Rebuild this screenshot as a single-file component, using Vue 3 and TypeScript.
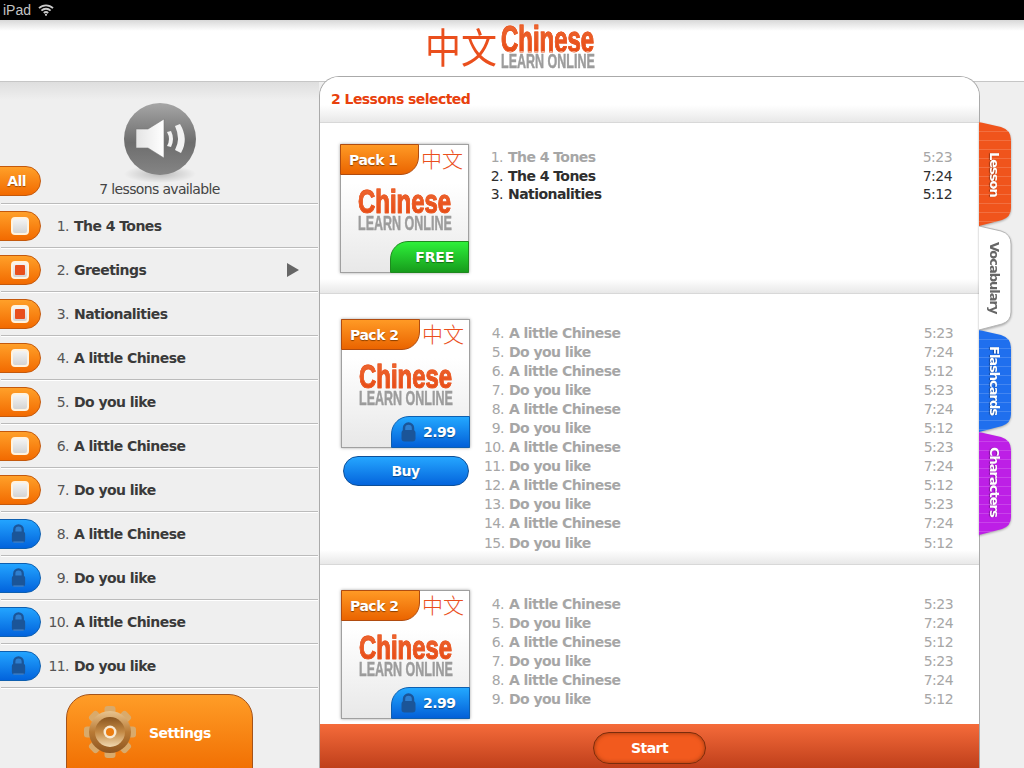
<script setup lang="ts">
interface Row { n: number; name: string; state: 'off' | 'on' | 'lock'; play?: boolean }
interface Lesson { n: number; name: string; time: string; active?: boolean }
interface Pack { title: string; badge: 'free' | 'price'; buy?: boolean; cls: string; lessons: Lesson[] }

const names = ['A little Chinese', 'Do you like']
const times = ['5:23', '7:24', '5:12']

const rows: Row[] = [
  { n: 1, name: 'The 4 Tones', state: 'off' },
  { n: 2, name: 'Greetings', state: 'on', play: true },
  { n: 3, name: 'Nationalities', state: 'on' },
  { n: 4, name: names[0], state: 'off' },
  { n: 5, name: names[1], state: 'off' },
  { n: 6, name: names[0], state: 'off' },
  { n: 7, name: names[1], state: 'off' },
  { n: 8, name: names[0], state: 'lock' },
  { n: 9, name: names[1], state: 'lock' },
  { n: 10, name: names[0], state: 'lock' },
  { n: 11, name: names[1], state: 'lock' }
]

const seq = (from: number, count: number): Lesson[] =>
  Array.from({ length: count }, (_, i) => ({
    n: from + i,
    name: names[i % 2],
    time: times[i % 3]
  }))

const packs: Pack[] = [
  {
    title: 'Pack 1',
    badge: 'free',
    cls: 'first',
    lessons: [
      { n: 1, name: 'The 4 Tones', time: '5:23' },
      { n: 2, name: 'The 4 Tones', time: '7:24', active: true },
      { n: 3, name: 'Nationalities', time: '5:12', active: true }
    ]
  },
  { title: 'Pack 2', badge: 'price', buy: true, cls: 'second', lessons: seq(4, 12) },
  { title: 'Pack 2', badge: 'price', cls: 'third', lessons: seq(4, 6) }
]

const tabs = [
  { label: 'Lesson', cls: 'lesson', h: 104, fill: '#f0541c' },
  { label: 'Vocabulary', cls: 'vocab', h: 104, fill: '#ffffff' },
  { label: 'Flashcards', cls: 'flash', h: 102, fill: '#1f6fee' },
  { label: 'Characters', cls: 'chars', h: 103, fill: '#bd1fe6' }
]

const tabPath = (h: number): string =>
  `M0 0 L22 5 Q32 8 32 18 L32 ${h - 18} Q32 ${h - 9} 23 ${h - 6} L0 ${h} Z`

const teeth = [0, 45, 90, 135, 180, 225, 270, 315]
</script>

<template>
  <div class="app">
    <div class="status">
      <span class="carrier">iPad</span>
      <svg class="wifi" width="16" height="12" viewBox="0 0 16 12">
        <path d="M1 4.2 A10 10 0 0 1 15 4.2" fill="none" stroke="#ccc" stroke-width="1.8" />
        <path d="M3.4 6.6 A6.6 6.6 0 0 1 12.6 6.6" fill="none" stroke="#ccc" stroke-width="1.8" />
        <path d="M5.8 9 A3.2 3.2 0 0 1 10.2 9" fill="none" stroke="#ccc" stroke-width="1.8" />
        <circle cx="8" cy="10.8" r="1.1" fill="#ccc" />
      </svg>
    </div>

    <header class="top">
      <div class="cjk large">中文</div>
      <div class="brand large">
        <div class="b1">Chinese</div>
        <div class="b2">LEARN ONLINE</div>
      </div>
    </header>

    <div class="body">
      <aside class="side">
        <div class="hero">
          <button class="pill orange all">All</button>
          <div class="speaker-wrap">
            <svg class="speaker" width="84" height="84" viewBox="0 0 84 84">
              <defs>
                <linearGradient id="disc" x1="0" y1="0" x2="0" y2="1">
                  <stop offset="0" stop-color="#a6a6a6" />
                  <stop offset="0.55" stop-color="#6d6d6d" />
                  <stop offset="1" stop-color="#858585" />
                </linearGradient>
                <linearGradient id="cone" x1="0" y1="0" x2="1" y2="0">
                  <stop offset="0" stop-color="#e4e4e4" />
                  <stop offset="1" stop-color="#ffffff" />
                </linearGradient>
                <radialGradient id="drop" cx="0.5" cy="0.5" r="0.5">
                  <stop offset="0" stop-color="#000" stop-opacity="0.22" />
                  <stop offset="1" stop-color="#000" stop-opacity="0" />
                </radialGradient>
              </defs>
              <ellipse cx="42" cy="74" rx="36" ry="9" fill="url(#drop)" />
              <circle cx="42" cy="39" r="36" fill="url(#disc)" />
              <path d="M18 29 H30 L46 19 V58 L30 48 H18 Z" fill="url(#cone)" stroke="#777" stroke-width="0.6" />
              <path d="M49 32 Q53 39 49 46 L53 47 Q57 39 53 31 Z" fill="#f2f2f2" />
              <path d="M57 26 L62 24 Q71 39 63 53 L57 50 Q63 39 57 26 Z" fill="#f2f2f2" />
            </svg>
            <div class="avail">7 lessons available</div>
          </div>
        </div>

        <div v-for="r in rows" :key="r.n" class="row">
          <button class="pill" :class="r.state === 'lock' ? 'blue' : 'orange'">
            <span v-if="r.state !== 'lock'" class="check">
              <i v-if="r.state === 'on'"></i>
            </span>
            <svg v-else class="lock" width="15" height="19" viewBox="0 0 15 20">
              <path d="M3 9 V6 A4.5 4.5 0 0 1 12 6 V9" fill="#2e7fd0" stroke="#1b5598" stroke-width="2.4" />
              <rect x="0.5" y="8" width="14" height="11.5" rx="3" fill="#1b5598" />
              <path d="M2 19 H13" stroke="#5b9be0" stroke-width="0.8" />
            </svg>
          </button>
          <span class="num">{{ r.n }}.</span>
          <b class="name">{{ r.name }}</b>
          <svg v-if="r.play" class="play" width="12" height="14" viewBox="0 0 12 14">
            <path d="M0 0 L12 7 L0 14 Z" fill="#666" />
          </svg>
        </div>

        <div class="settings-wrap">
          <button class="settings">
            <svg class="gear" width="54" height="54" viewBox="0 0 54 54">
              <defs>
                <linearGradient id="gearOut" x1="0" y1="0" x2="0" y2="1">
                  <stop offset="0" stop-color="#e9c48e" />
                  <stop offset="0.5" stop-color="#b97a35" />
                  <stop offset="1" stop-color="#8d5520" />
                </linearGradient>
                <linearGradient id="gearIn" x1="0" y1="0" x2="0" y2="1">
                  <stop offset="0" stop-color="#8a551f" />
                  <stop offset="0.5" stop-color="#c48a45" />
                  <stop offset="1" stop-color="#f0d8b0" />
                </linearGradient>
              </defs>
              <rect v-for="a in teeth" :key="a" x="21.5" y="1" width="11" height="10" rx="3" fill="#d9aa6b" :transform="`rotate(${a} 27 27)`" />
              <circle cx="27" cy="27" r="21" fill="url(#gearOut)" />
              <circle cx="27" cy="27" r="15" fill="url(#gearIn)" />
              <circle cx="27" cy="27" r="6.5" fill="#f8e9d2" />
              <circle cx="27" cy="27" r="4" fill="#ed7d10" />
            </svg>
            <span>Settings</span>
          </button>
        </div>
      </aside>

      <main class="panel">
        <div class="panel-head">2 Lessons selected</div>
        <section v-for="(p, i) in packs" :key="i" class="pack" :class="p.cls">
          <div class="cover-col">
            <div class="cover">
              <div class="cover-top">
                <span class="tag">{{ p.title }}</span>
                <span class="cjk small">中文</span>
              </div>
              <div class="brand small">
                <div class="b1">Chinese</div>
                <div class="b2">LEARN ONLINE</div>
              </div>
              <div class="cover-foot">
                <span class="badge" :class="p.badge">
                  <template v-if="p.badge === 'free'">FREE</template>
                  <template v-else>
                    <svg width="15" height="20" viewBox="0 0 15 20">
                      <path d="M3 9 V6 A4.5 4.5 0 0 1 12 6 V9" fill="#2e7fd0" stroke="#1b5598" stroke-width="2.4" />
                      <rect x="0.5" y="8" width="14" height="11.5" rx="3" fill="#1b5598" />
                    </svg>
                    <span>2.99</span>
                  </template>
                </span>
              </div>
            </div>
            <button v-if="p.buy" class="buy">Buy</button>
          </div>
          <ol class="lessons">
            <li v-for="l in p.lessons" :key="l.n" :class="{ active: l.active }">
              <span class="num">{{ l.n }}.</span>
              <b class="name">{{ l.name }}</b>
              <span class="time">{{ l.time }}</span>
            </li>
          </ol>
        </section>
        <div class="foot">
          <button class="start">Start</button>
        </div>
      </main>

      <nav class="tabs">
        <div v-for="t in tabs" :key="t.label" class="tab" :class="t.cls" :style="{ height: t.h + 'px' }">
          <svg width="35" :height="t.h" :viewBox="`0 0 35 ${t.h}`">
            <defs>
              <pattern :id="'st-' + t.cls" width="4" height="9" patternUnits="userSpaceOnUse">
                <rect y="0" width="4" height="1" fill="#fff" opacity="0.16" />
              </pattern>
            </defs>
            <path :d="tabPath(t.h)" :fill="t.fill" />
            <path v-if="t.cls !== 'vocab'" :d="tabPath(t.h)" :fill="`url(#st-${t.cls})`" />
            <path v-else :d="tabPath(t.h).replace(' Z', '')" fill="none" stroke="#b5b5b5" />
          </svg>
          <span>{{ t.label }}</span>
        </div>
      </nav>
    </div>
  </div>
</template>

<style>
html,
body {
  margin: 0;
  background: #efefef;
}
</style>

<style scoped>
.app {
  width: 1024px;
  height: 768px;
  overflow: hidden;
  display: flex;
  flex-direction: column;
  font-family: "DejaVu Sans", sans-serif;
  font-size: 14px;
  letter-spacing: -0.55px;
  color: #333;
}
button {
  font-family: inherit;
  letter-spacing: inherit;
  padding: 0;
  cursor: pointer;
}

.status {
  height: 20px;
  flex: none;
  background: #000;
  display: flex;
  align-items: center;
  padding-left: 3px;
  gap: 7px;
}
.carrier {
  font-family: "Liberation Sans", sans-serif;
  font-size: 14px;
  letter-spacing: 0;
  color: #c4c4c4;
}
.wifi {
  margin-top: -1px;
}

.top {
  height: 62px;
  flex: none;
  box-sizing: border-box;
  background: linear-gradient(#d8d8d8, #fff 11px);
  border-bottom: 1px solid #c6c6c6;
  display: flex;
  justify-content: center;
  align-items: flex-start;
  gap: 2px;
  padding: 2px 2px 0 0;
}

.cjk {
  font-family: "Noto Sans CJK SC", sans-serif;
  font-weight: 400;
  letter-spacing: 0;
  color: #ea4f1d;
  white-space: nowrap;
  line-height: 1;
}
.cjk.large {
  font-size: 36px;
  transform: scaleY(1.14);
  transform-origin: top;
  margin-top: 2px;
  width: 74px;
}
.cjk.small {
  font-size: 21px;
  font-weight: 300;
  margin: 3px 5px 0 0;
}

.brand {
  font-family: "Liberation Sans", sans-serif;
  font-weight: 700;
  letter-spacing: 0;
  white-space: nowrap;
}
.brand .b1,
.brand .b2 {
  transform-origin: left top;
  line-height: 1;
}
.b1 {
  background: linear-gradient(#ee6a35, #e74c16);
  -webkit-background-clip: text;
  background-clip: text;
  color: transparent;
  -webkit-text-stroke: 0.9px #ea5a25;
  width: 140px;
}
.b2 {
  color: #9c9c9c;
  -webkit-text-stroke: 0.5px #9c9c9c;
}
.brand.large {
  width: 96px;
}
.brand.large .b1 {
  font-size: 36px;
  height: 29px;
  transform: scaleX(0.665);
}
.brand .b2 {
  font-size: 20px;
  height: 16px;
  transform: scaleX(0.625);
}
.brand.small .b1 {
  font-size: 33px;
  height: 28px;
  transform: scaleX(0.725);
}

.body {
  flex: 1;
  min-height: 0;
  display: flex;
  background: #efefef;
}

.side {
  width: 319px;
  flex: none;
  display: flex;
  flex-direction: column;
  background: linear-gradient(#dedede, #efefef 18px);
}
.hero {
  height: 122px;
  flex: none;
  box-sizing: border-box;
  display: grid;
  border-bottom: 1px solid #bbb;
  margin: 0 1px 0 1px;
  box-shadow: 0 1px 0 #fff;
}
.hero > * {
  grid-area: 1 / 1;
}
.speaker-wrap {
  display: flex;
  flex-direction: column;
  align-items: center;
  padding-top: 18px;
  position: relative;
}
.avail {
  margin-top: -3px;
  letter-spacing: -0.65px;
  color: #444;
}
.pill {
  width: 62px;
  height: 30px;
  margin-left: -22px;
  border-radius: 15px;
  box-sizing: border-box;
  display: flex;
  align-items: center;
  justify-content: flex-end;
  flex: none;
  position: relative;
}
.orange {
  border: 1px solid #c4590c;
  background: linear-gradient(#ffa029, #f26a00);
}
.blue {
  border: 1px solid #0d5fb0;
  background: linear-gradient(#23a4ff, #0263dc);
}
.all {
  margin-left: -22px;
  align-self: end;
  margin-bottom: 7px;
  z-index: 1;
  color: #fff;
  font-weight: 700;
  font-size: 14px;
  padding-right: 14px;
  text-shadow: 0 1px 1px #a04a00;
}
.check {
  width: 18px;
  height: 18px;
  box-sizing: border-box;
  margin-right: 11px;
  border: 2px solid #fff3e0;
  border-radius: 4px;
  background: linear-gradient(#f4f4f4, #d4d4d4);
  display: flex;
  align-items: center;
  justify-content: center;
}
.check i {
  width: 10px;
  height: 10px;
  border-radius: 1px;
  background: #e84f1c;
}
.lock {
  margin-right: 14px;
}
.row {
  height: 44px;
  flex: none;
  box-sizing: border-box;
  display: flex;
  align-items: center;
  border-bottom: 1px solid #bbb;
  box-shadow: 0 1px 0 #fff;
  margin: 0 1px 0 1px;
  position: relative;
}
.row .num {
  width: 28px;
  text-align: right;
  color: #555;
  flex: none;
}
.row .name {
  margin-left: 5px;
  color: #3a3a3a;
}
.play {
  margin-left: auto;
  margin-right: 19px;
}
.settings-wrap {
  flex: 1;
  display: flex;
  justify-content: center;
  padding-top: 6px;
}
.settings {
  width: 187px;
  height: 100px;
  box-sizing: border-box;
  border: 1px solid #a4531a;
  border-radius: 24px 24px 0 0;
  background: linear-gradient(#ff9d27, #f06c00 80px);
  display: flex;
  align-items: flex-start;
  padding: 10px 0 0 16px;
  gap: 12px;
  color: #fff;
  font-weight: 700;
  font-size: 14px;
}
.settings span {
  margin-top: 20px;
}

.panel {
  width: 661px;
  flex: none;
  box-sizing: border-box;
  margin-top: -6px;
  height: 692px;
  background: #fff;
  border: 1px solid #aaa;
  border-bottom: 0;
  border-radius: 20px 20px 0 0;
  display: flex;
  flex-direction: column;
  position: relative;
  z-index: 2;
  overflow: hidden;
}
.panel-head {
  height: 46px;
  flex: none;
  box-sizing: border-box;
  padding: 14px 0 0 11px;
  font-weight: 700;
  font-size: 14px;
  color: #e8400c;
  background: linear-gradient(#fff 28px, #e8e8e8);
  border-bottom: 1px solid #d8d8d8;
}
.pack {
  flex: none;
  box-sizing: border-box;
  display: flex;
  border-bottom: 1px solid #d8d8d8;
  background: linear-gradient(#fff calc(100% - 14px), #e8e8e8);
}
.pack.first {
  height: 171px;
  padding: 21px 27px 0 20px;
}
.pack.second {
  height: 271px;
  padding: 25px 26px 0 21px;
}
.pack.third {
  flex: 1;
  min-height: 0;
  border-bottom: 0;
  background: #fff;
  padding: 25px 26px 0 21px;
}
.cover-col {
  width: 129px;
  flex: none;
  display: flex;
  flex-direction: column;
  align-items: center;
}
.cover {
  width: 129px;
  height: 129px;
  flex: none;
  box-sizing: border-box;
  border: 1px solid #a0a0a0;
  box-shadow: 0 0 3px rgba(0, 0, 0, 0.35);
  background: linear-gradient(#fff 30%, #e8e8e8);
  display: flex;
  flex-direction: column;
}
.cover-top {
  height: 31px;
  flex: none;
  display: flex;
  justify-content: space-between;
}
.tag {
  width: 79px;
  height: 31px;
  box-sizing: border-box;
  margin: -1px 0 0 -1px;
  padding: 7px 0 0 8px;
  border: 1px solid #b04c10;
  border-radius: 0 0 18px 0;
  background: linear-gradient(#ff9a25, #ea6400);
  color: #fff;
  font-weight: 700;
  font-size: 14px;
  letter-spacing: -0.5px;
  text-shadow: 0 1px 1px #8a4000;
}
.brand.small {
  padding: 9px 0 0 17px;
  flex: none;
}
.cover-foot {
  margin-top: auto;
  display: flex;
  justify-content: flex-end;
}
.badge {
  width: 79px;
  height: 32px;
  box-sizing: border-box;
  margin: 0 -1px -1px 0;
  border-radius: 18px 0 0 0;
  display: flex;
  align-items: center;
  color: #fff;
  font-weight: 700;
  font-size: 14px;
  letter-spacing: -0.5px;
  text-shadow: 0 1px 1px rgba(0, 0, 0, 0.4);
}
.badge.free {
  justify-content: flex-end;
  padding-right: 14px;
  letter-spacing: -0.2px;
  border: 1px solid #1f8a1f;
  background: linear-gradient(#2ef03a, #179c1c);
}
.badge.price {
  gap: 7px;
  padding-left: 9px;
  border: 1px solid #0d5fb0;
  background: linear-gradient(#23a8ff, #0360d8);
}
.buy {
  width: 126px;
  height: 30px;
  margin-top: 8px;
  box-sizing: border-box;
  border: 1px solid #0d4f98;
  border-radius: 15px;
  background: linear-gradient(#25a6ff, #0464dc);
  color: #fff;
  font-weight: 700;
  font-size: 14px;
  text-shadow: 0 1px 1px rgba(0, 0, 0, 0.4);
}
.lessons {
  list-style: none;
  margin: 0;
  padding: 0;
  flex: 1;
  margin-left: 14px;
  margin-top: 4px;
}
.first .lessons {
  margin-top: 4px;
  margin-left: 21px;
}
.lessons li {
  display: flex;
  height: 19.1px;
  align-items: center;
  color: #a6a6a6;
}
.first .lessons li {
  height: 18.5px;
}
.lessons .num {
  width: 20px;
  text-align: right;
  flex: none;
}
.first .lessons .num {
  width: 13px;
}
.lessons .name {
  margin-left: 5px;
}
.lessons .time {
  margin-left: auto;
}
.lessons li.active {
  color: #2e2e2e;
}

.foot {
  height: 44px;
  flex: none;
  background: linear-gradient(#f56b3a, #bf3f1b);
  display: flex;
  justify-content: center;
  align-items: center;
}
.start {
  width: 113px;
  height: 32px;
  margin: 4px 0 0 0;
  border: 1px solid #7a2c0c;
  border-radius: 16px;
  background: #f25a1e;
  box-shadow: inset 0 0 4px rgba(90, 30, 0, 0.6);
  color: #fff;
  font-weight: 700;
  font-size: 14px;
}

.tabs {
  flex: none;
  width: 45px;
  margin-left: -1px;
  padding-top: 40px;
  position: relative;
  z-index: 3;
  display: flex;
  flex-direction: column;
}
.tab {
  flex: none;
  display: grid;
  position: relative;
  filter: drop-shadow(0 1px 1px rgba(0, 0, 0, 0.3));
}
.tab > * {
  grid-area: 1 / 1;
}
.tab span {
  writing-mode: vertical-rl;
  justify-self: start;
  align-self: center;
  width: 30px;
  display: flex;
  align-items: center;
  justify-content: center;
  font-weight: 700;
  font-size: 13px;
  letter-spacing: -1px;
  color: #fff;
  text-shadow: 0 1px 1px rgba(0, 0, 0, 0.35);
}
.tab.chars span {
  padding-bottom: 4px;
}
.tab.vocab span {
  color: #666;
  text-shadow: none;
}
</style>
